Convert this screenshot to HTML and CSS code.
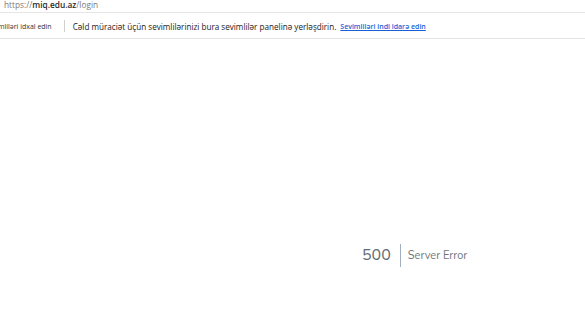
FILE: index.html
```html
<!DOCTYPE html>
<html lang="az">
<head>
<meta charset="utf-8">
<title>Server Error</title>
<link rel="stylesheet" href="styles.css">
</head>
<body>
<div class="addr">
  <span class="url"><span class="dim">https://</span><span class="host">miq.edu.az</span><span class="dim">/login</span></span>
</div>
<div class="favbar">
  <span class="import">Sevimliləri idxal edin</span>
  <span class="sep"></span>
  <span class="msg">Cəld müraciət üçün sevimlilərinizi bura sevimlilər panelinə yerləşdirin.</span>
  <a class="link" href="#">Sevimliləri indi idarə edin</a>
</div>
<main class="page">
  <div class="err">
    <div class="code">500</div>
    <div class="msgerr">Server Error</div>
  </div>
</main>
</body>
</html>
```
FILE: styles.css
```css
html, body {
  margin: 0;
  padding: 0;
  background: #ffffff;
  width: 585px;
  height: 326px;
  overflow: hidden;
}
body {
  font-family: "Open Sans", "Noto Sans", sans-serif;
}
.addr {
  height: 12px;
  border-bottom: 1px solid #e6e6e6;
  background: #ffffff;
  display: flex;
  align-items: flex-end;
  padding-left: 4px;
  overflow: hidden;
}
.url {
  font-size: 8.3px;
  line-height: 11px;
  margin-bottom: 2px;
  color: #7a7a7a;
}
.url .host {
  color: #2a2a2a;
  font-weight: 600;
}
.favbar {
  height: 24px;
  border-bottom: 1px solid #e3e3e3;
  display: flex;
  align-items: center;
  white-space: nowrap;
  overflow: hidden;
  padding-top: 1px;
}
.import {
  font-size: 7px;
  color: #333333;
  margin-left: -15px;
}
.sep {
  width: 1px;
  height: 12px;
  background: #d0d0d0;
  margin: 0 8px 0 12px;
}
.msg {
  font-size: 8.15px;
  color: #222222;
}
.link {
  font-size: 7px;
  color: #1a5fd6;
  font-weight: 600;
  text-decoration: underline;
  margin-left: 4px;
}
.page {
  display: flex;
  height: 287px;
  padding-left: 362px;
  padding-top: 205px;
  box-sizing: border-box;
}
.err {
  display: flex;
  align-items: center;
  height: 23px;
  font-family: "Nunito", "Lato", "Open Sans", sans-serif;
  color: #636b6f;
}
.code {
  font-size: 16px;
  padding-right: 9px;
  border-right: 1px solid #a0aec0;
  line-height: 23px;
}
.msgerr {
  font-size: 11px;
  padding-left: 7px;
  color: #6f767a;
}
```
